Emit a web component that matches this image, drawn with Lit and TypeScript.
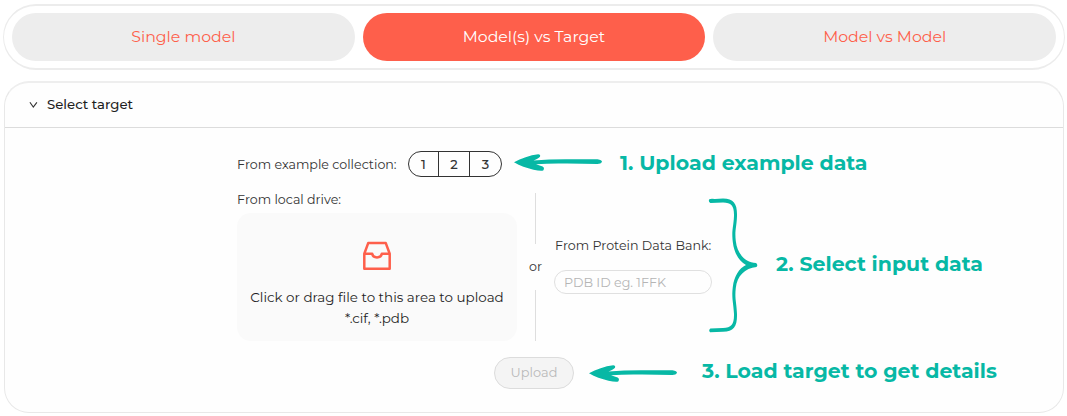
import { LitElement, html, svg, css } from "lit";
import { customElement, property, state } from "lit/decorators.js";

const FONT = css`Montserrat, Inter, sans-serif`;

@customElement("hint-arrow")
export class HintArrow extends LitElement {
  static styles = css`
    :host { display: block; width: 92px; height: 24px; flex: none; }
    svg { display: block; fill: #07b8a5; }
  `;
  render() {
    return html`<svg width="92" height="24" viewBox="0 0 92 24">
      <path d="M2 12.3C9 8.2 18 5.2 26.2 4.2Q28.8 4.3 28 6.8Q26.8 8.2 21.5 10.6Q40 9 60 9.3L85.5 9.2Q90 9.8 90 11.9Q89 14 85 13.9L55 13.6Q38 13.2 24 14.3L30.6 16.6Q33 18.2 31.2 20.6Q28 21.2 21.5 19.7C14.5 18 8 16 2 12.3Z"></path>
    </svg>`;
  }
}

@customElement("tab-bar")
export class TabBar extends LitElement {
  static styles = css`
    :host { display: block; }
    .bar {
      box-sizing: border-box; height: 66px; display: flex; gap: 8px; padding: 7px 8px;
      border: solid #ececec; border-width: 2px 1px; border-radius: 33px;
    }
    .tab {
      flex: 1; height: 48px; border: 0; border-radius: 24px; padding: 0; background: #ededed;
      color: #fe5f4b; font: 400 15.75px/48px ${FONT}; text-align: center;
    }
    .active { background: #fe5f4b; color: #fff; }
  `;
  @property({ attribute: false }) tabs: string[] = [];
  @state() current = 1;
  render() {
    return html`<div class="bar">
      ${this.tabs.map((t, i) => html`<button class="tab ${i === this.current ? "active" : ""}" @click=${() => (this.current = i)}>${t}</button>`)}
    </div>`;
  }
}

@customElement("app-root")
export class AppRoot extends LitElement {
  static styles = css`
    :host {
      display: block; box-sizing: border-box; height: 416px; padding: 4px 2px 0 3px;
      background: #fff; color: #333; font: 400 12.65px/20px ${FONT}; overflow: hidden;
    }
    .panel {
      box-sizing: border-box; height: 332px; margin: 11px 1px 0; background: #fefefe;
      border: 1px solid #e8e8e8; border-top: 2px solid #eee; border-radius: 25px;
    }
    .head {
      display: flex; align-items: center; gap: 9px; height: 44px; padding-left: 24px;
      border-bottom: 1px solid #dcdcdc; color: #1f1f1f; font-size: 13.25px; font-weight: 500;
    }
    .head svg { display: block; }
    .head span { padding-bottom: 2px; }
    .body { padding: 23px 0 0 232px; }
    .row { display: flex; align-items: center; }
    .examples { height: 26px; }
    .examples .label { width: 171px; padding-top: 1px; }
    .group {
      display: flex; box-sizing: border-box; width: 94px; height: 26px;
      border: 1px solid #333; border-radius: 13px; overflow: hidden;
    }
    .group button {
      box-sizing: border-box; width: 31px; border: 0; padding: 0; background: transparent; color: #333;
      font: 500 13px/24px ${FONT};
    }
    .group button + button { border-left: 1px solid #333; }
    .group button:first-child { width: 29px; }
    .group button:last-child { width: 32px; }
    .hint { color: #07b8a5; font-size: 20.5px; font-weight: 700; line-height: 26px; white-space: nowrap; }
    .examples .hint { margin-top: -3px; }
    .examples hint-arrow { margin: -4px 16px 0 10px; }
    .inputs { display: flex; margin-top: 12px; height: 152px; }
    .drive { width: 280px; }
    .drop {
      box-sizing: border-box; height: 128px; margin-top: 3px; padding-top: 28px;
      display: flex; flex-direction: column; align-items: center; text-align: center;
      border-radius: 14px; background: #fafafa; color: #1f1f1f; font-size: 13.45px;
    }
    .drop svg { display: block; margin-bottom: 15px; }
    .drop p { margin: 0; padding-top: 1px; line-height: 20.5px; white-space: nowrap; }
    .line { line-height: 20px; }
    .drive .line { padding-top: 1px; }
    .divider {
      width: 37px; display: flex; flex-direction: column; align-items: center; padding-top: 4px;
    }
    .divider i { width: 1px; height: 51px; background: #dedede; }
    .divider span { height: 46px; line-height: 45px; }
    .bank { width: 158px; padding-top: 47px; }
    .bank .line { padding-left: 1px; margin-right: -4px; }
    .bank input {
      display: block; box-sizing: border-box; width: 158px; height: 24px; margin-top: 14px;
      padding: 0 9px; border: 1px solid #e0e0e0; border-radius: 12px; background: #fefefe;
      font: 400 12.7px/22px ${FONT}; outline: none;
    }
    .bank input::placeholder { color: #b5b5b5; opacity: 1; }
    .brace { display: block; margin: 8px 0 0 -5px; flex: none; position: relative; }
    .inputs .hint { margin: 62px 0 0 17px; }
    .actions { height: 32px; margin-top: 16px; padding-left: 257px; }
    .upload {
      box-sizing: border-box; width: 80px; height: 32px; padding: 0; border: 1px solid #dcdcdc;
      border-radius: 16px; background: #f4f4f4; color: #b9b9b9; font: 400 12.9px/30px ${FONT};
    }
    .actions .hint { margin-top: -4px; }
    .actions hint-arrow { margin: 0 23px 0 13px; }
  `;

  render() {
    return html`
      <tab-bar .tabs=${["Single model", "Model(s) vs Target", "Model vs Model"]}></tab-bar>
      <section class="panel">
        <div class="head">
          <svg width="9" height="8" viewBox="0 0 9 8"><path d="M0.9 1.3 4.3 6 7.9 1.3" fill="none" stroke="#333" stroke-width="1.1"></path></svg>
          <span>Select target</span>
        </div>
        <div class="body">
          <div class="row examples">
            <span class="label">From example collection:</span>
            <div class="group">${[1, 2, 3].map((n) => html`<button>${n}</button>`)}</div>
            <hint-arrow></hint-arrow>
            <span class="hint">1. Upload example data</span>
          </div>
          <div class="inputs">
            <div class="drive">
              <div class="line">From local drive:</div>
              <div class="drop">
                <svg width="30" height="30" viewBox="0 0 30 30" fill="none" stroke="#fe5f4b" stroke-width="2.5" stroke-linejoin="round">
                  <path d="M2.3 12.8 6.2 2.1H23.8L27.7 12.8V27.7H2.3Z"></path>
                  <path d="M2.3 12.8H10.2C10.9 17.6 19.1 17.6 19.8 12.8H27.7"></path>
                </svg>
                <p>Click or drag file to this area to upload<br />*.cif, *.pdb</p>
              </div>
            </div>
            <div class="divider"><i></i><span>or</span><i></i></div>
            <div class="bank">
              <div class="line">From Protein Data Bank:</div>
              <input placeholder="PDB ID eg. 1FFK" />
            </div>
            <svg class="brace" width="52" height="136" viewBox="0 0 52 136" fill="#07b8a5">${svg`
              <path d="M2.3 2.2Q4 1.4 8 2L16 1.6C27 1.8 30.3 7 30 19C29.6 31 27.5 33 28.8 44C30 56 38 66 49 66Q51.4 67.9 49.4 70C38 71 30 79 28.8 91C27.5 102 29.6 105 30 117C30.3 129 27 134.6 16 134.7L3 135.3Q1.2 133.4 3.4 131.4L16 131C24.5 131 27.2 127 27 117C26.4 105 24.4 102 25.8 90C27.2 79 32 71.5 39 68C32 64 27 56 25.8 45C24.4 33 26.4 31 27 19C27.2 9 24.5 5.6 16 5.6L3.4 6Q1 4.4 2.3 2.2Z"></path>`}
            </svg>
            <span class="hint">2. Select input data</span>
          </div>
          <div class="row actions">
            <button class="upload" disabled>Upload</button>
            <hint-arrow></hint-arrow>
            <span class="hint">3. Load target to get details</span>
          </div>
        </div>
      </section>
    `;
  }
}
